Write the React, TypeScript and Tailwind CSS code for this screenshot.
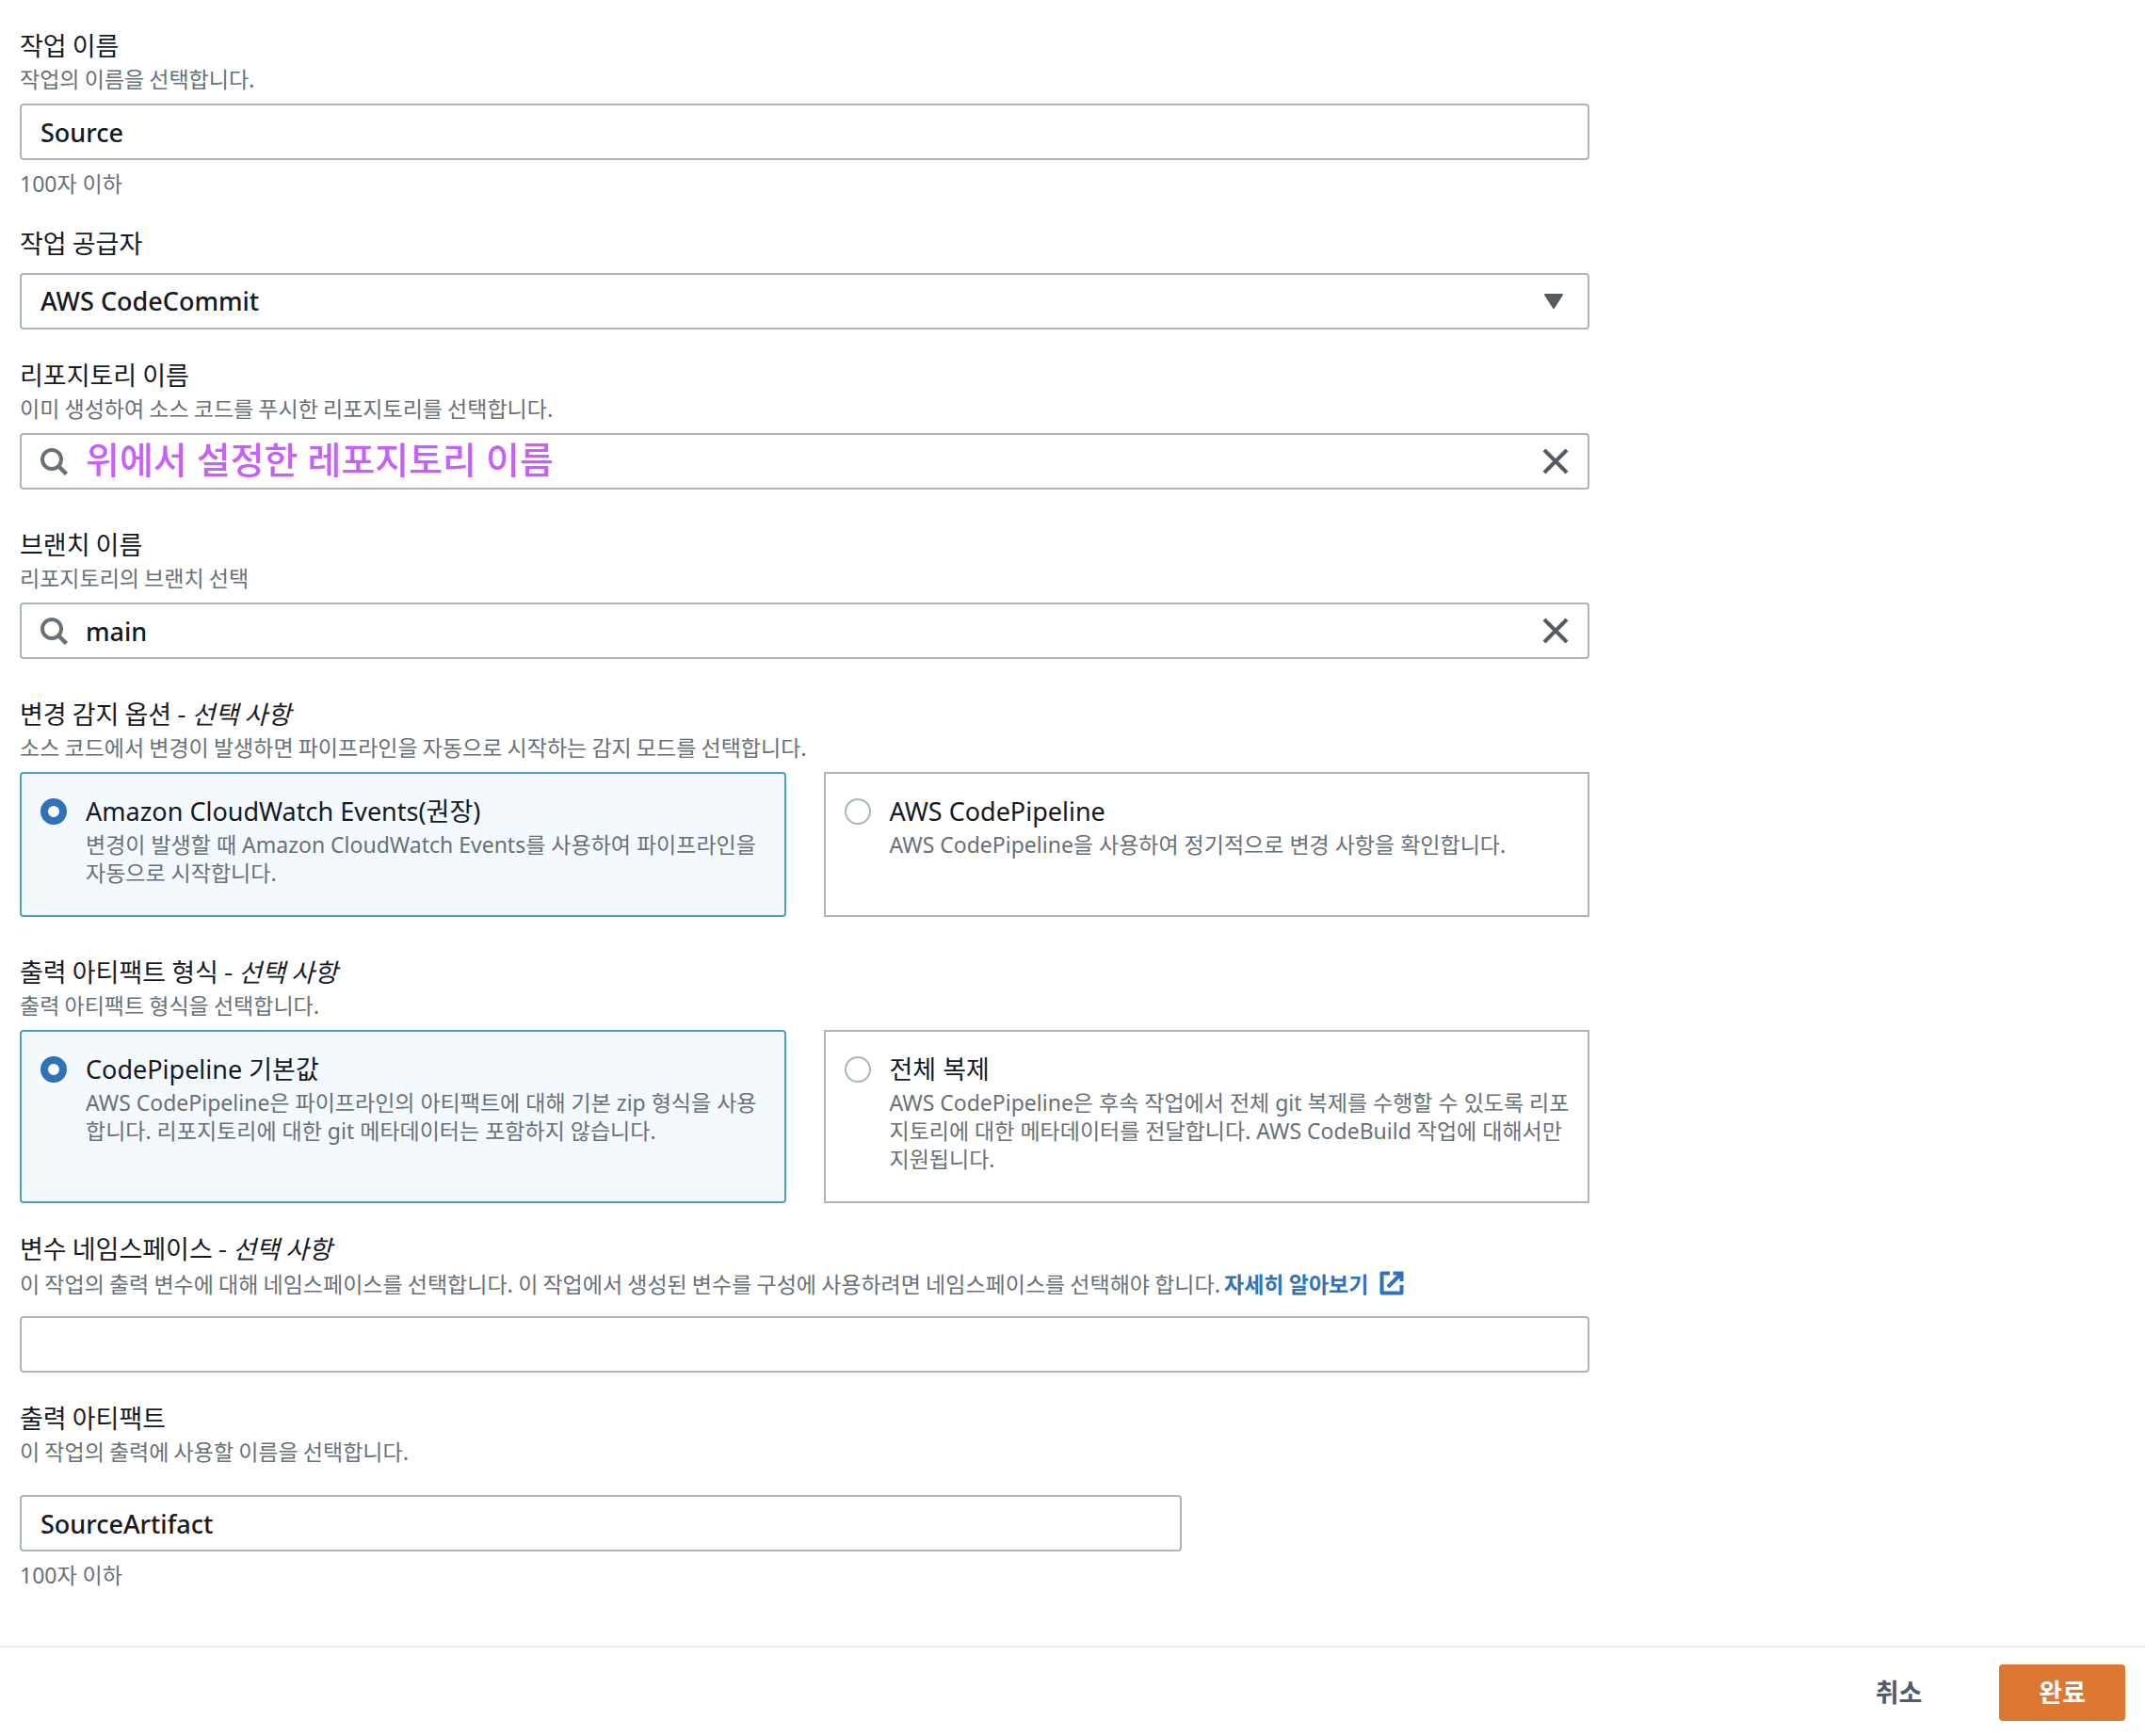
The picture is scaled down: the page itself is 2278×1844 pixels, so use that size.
import { useState } from "react";
import type { ReactNode } from "react";

interface RadioCardOption {
  value: string;
  title: string;
  description: string;
}

const detectionOptions: RadioCardOption[] = [
  {
    value: "cloudwatch",
    title: "Amazon CloudWatch Events(권장)",
    description:
      "변경이 발생할 때 Amazon CloudWatch Events를 사용하여 파이프라인을 자동으로 시작합니다.",
  },
  {
    value: "codepipeline",
    title: "AWS CodePipeline",
    description:
      "AWS CodePipeline을 사용하여 정기적으로 변경 사항을 확인합니다.",
  },
];

const formatOptions: RadioCardOption[] = [
  {
    value: "default",
    title: "CodePipeline 기본값",
    description:
      "AWS CodePipeline은 파이프라인의 아티팩트에 대해 기본 zip 형식을 사용합니다. 리포지토리에 대한 git 메타데이터는 포함하지 않습니다.",
  },
  {
    value: "clone",
    title: "전체 복제",
    description:
      "AWS CodePipeline은 후속 작업에서 전체 git 복제를 수행할 수 있도록 리포지토리에 대한 메타데이터를 전달합니다. AWS CodeBuild 작업에 대해서만 지원됩니다.",
  },
];

const inputClass =
  "h-[60px] rounded-[4px] border-2 border-[#aab7b8] bg-white px-5 text-[27px] font-medium text-[#16191f] outline-none focus:border-[#00a1c9]";

function SearchIcon() {
  return (
    <svg viewBox="0 0 30 30" className="h-[30px] w-[30px] shrink-0" fill="none" stroke="#687078">
      <circle cx="12" cy="13" r="10" strokeWidth="4" />
      <path d="M19 20l8.5 8.5" strokeWidth="4.5" />
    </svg>
  );
}

function CloseIcon() {
  return (
    <svg viewBox="0 0 28 28" className="h-7 w-7" fill="none" stroke="#545b64" strokeWidth="4">
      <path d="M2 2l24 24M26 2L2 26" />
    </svg>
  );
}

function CaretIcon() {
  return (
    <svg viewBox="0 0 20 16" className="h-4 w-5" fill="#545b64" stroke="#545b64" strokeWidth="2" strokeLinejoin="round">
      <path d="M1 1h18l-9 14z" />
    </svg>
  );
}

function ExternalIcon() {
  return (
    <svg viewBox="0 0 26 26" className="ml-3 h-[26px] w-[26px]" fill="none" stroke="currentColor" strokeWidth="4">
      <path d="M11 2.5H2.5v21h21V15" strokeLinejoin="round" />
      <path d="M14.5 2.5h9V11M23 3L9 17" />
    </svg>
  );
}

function FieldLabel({ children, optional, htmlFor }: { children: ReactNode; optional?: boolean; htmlFor?: string }) {
  const content = (
    <>
      {children}
      {optional && (
        <>
          {" - "}
          <i>선택 사항</i>
        </>
      )}
    </>
  );
  const className =
    "block font-['Noto_Sans_CJK_KR','Noto_Sans',sans-serif] text-[27px] leading-[40px] text-[#16191f]";

  return htmlFor ? (
    <label htmlFor={htmlFor} className={className}>
      {content}
    </label>
  ) : (
    <span className={className}>{content}</span>
  );
}

function Description({ children }: { children: ReactNode }) {
  return (
    <p className="font-['Noto_Sans_CJK_KR','Noto_Sans',sans-serif] text-[23px] leading-[30px] text-[#687078]">
      {children}
    </p>
  );
}

function Hint({ children }: { children: ReactNode }) {
  return <p className="mt-2.5 text-[23px] leading-[30px] text-[#687078]">{children}</p>;
}

function SearchField({ id, defaultValue, highlight }: { id: string; defaultValue: string; highlight?: boolean }) {
  const [value, setValue] = useState(defaultValue);

  return (
    <div className="mt-3 flex h-[60px] items-center rounded-[4px] border-2 border-[#aab7b8] bg-white px-5">
      <SearchIcon />
      <input
        id={id}
        type="text"
        value={value}
        onChange={(e) => setValue(e.target.value)}
        className={
          highlight
            ? "ml-[18px] h-full min-w-0 flex-1 pb-2 text-[39px] font-medium text-[#c561fa] outline-none"
            : "ml-[18px] h-full min-w-0 flex-1 text-[27px] font-medium text-[#16191f] outline-none"
        }
      />
      <button type="button" aria-label="지우기" onClick={() => setValue("")}>
        <CloseIcon />
      </button>
    </div>
  );
}

function RadioCards({ name, label, options }: { name: string; label: string; options: RadioCardOption[] }) {
  const [selected, setSelected] = useState(options[0].value);

  return (
    <div role="radiogroup" aria-label={label} className="mt-3 grid grid-cols-2 gap-10">
      {options.map((option) => {
        const checked = option.value === selected;
        return (
          <label
            key={option.value}
            className={
              checked
                ? "flex gap-5 rounded-[4px] border-2 border-[#47a1c7] bg-[#f3f9fd] pt-5 pr-4 pb-[30px] pl-5"
                : "flex gap-5 border-2 border-[#aab7b8] bg-white pt-5 pr-4 pb-[30px] pl-5"
            }
          >
            <input
              type="radio"
              name={name}
              checked={checked}
              onChange={() => setSelected(option.value)}
              className="mt-1.5 h-7 w-7 shrink-0 appearance-none rounded-full border-2 border-[#aab7b8] bg-white checked:border-8 checked:border-[#3072b8]"
            />
            <span className="min-w-0 flex-1">
              <span className="block text-[27px] leading-[40px] text-[#16191f]">{option.title}</span>
              <span className="block text-[23px] leading-[30px] text-[#687078]">{option.description}</span>
            </span>
          </label>
        );
      })}
    </div>
  );
}

export default function App() {
  return (
    <form
      className="bg-white font-['Noto_Sans','Noto_Sans_CJK_KR',sans-serif]"
      onSubmit={(e) => e.preventDefault()}
    >
      <div className="grid grid-cols-4 gap-10 px-[21px] pt-7 pb-[60px]">
        <div className="col-span-3 flex flex-col">
          {/* Action name */}
          <div>
            <FieldLabel htmlFor="action-name">작업 이름</FieldLabel>
            <Description>작업의 이름을 선택합니다.</Description>
            <input id="action-name" type="text" defaultValue="Source" className={`${inputClass} mt-3 block w-full`} />
            <Hint>100자 이하</Hint>
          </div>

          {/* Provider */}
          <div className="mt-7">
            <FieldLabel htmlFor="provider">작업 공급자</FieldLabel>
            <div className="relative mt-3">
              <select id="provider" className={`${inputClass} block w-full appearance-none`}>
                <option>AWS CodeCommit</option>
              </select>
              <span className="pointer-events-none absolute inset-y-0 right-7 flex items-center">
                <CaretIcon />
              </span>
            </div>
          </div>

          {/* Repository */}
          <div className="mt-7">
            <FieldLabel htmlFor="repository">리포지토리 이름</FieldLabel>
            <Description>이미 생성하여 소스 코드를 푸시한 리포지토리를 선택합니다.</Description>
            <SearchField id="repository" defaultValue="위에서 설정한 레포지토리 이름" highlight />
          </div>

          {/* Branch */}
          <div className="mt-[38px]">
            <FieldLabel htmlFor="branch">브랜치 이름</FieldLabel>
            <Description>리포지토리의 브랜치 선택</Description>
            <SearchField id="branch" defaultValue="main" />
          </div>

          {/* Change detection */}
          <div className="mt-[38px]">
            <FieldLabel optional>변경 감지 옵션</FieldLabel>
            <Description>소스 코드에서 변경이 발생하면 파이프라인을 자동으로 시작하는 감지 모드를 선택합니다.</Description>
            <RadioCards name="detection" label="변경 감지 옵션" options={detectionOptions} />
          </div>

          {/* Artifact format */}
          <div className="mt-[38px]">
            <FieldLabel optional>출력 아티팩트 형식</FieldLabel>
            <Description>출력 아티팩트 형식을 선택합니다.</Description>
            <RadioCards name="format" label="출력 아티팩트 형식" options={formatOptions} />
          </div>

          {/* Namespace */}
          <div className="mt-7">
            <FieldLabel htmlFor="namespace" optional>
              변수 네임스페이스
            </FieldLabel>
            <div className="flex flex-wrap items-center font-['Noto_Sans_CJK_KR','Noto_Sans',sans-serif] text-[23px] leading-[34px] text-[#687078]">
              <span>
                이 작업의 출력 변수에 대해 네임스페이스를 선택합니다. 이 작업에서 생성된 변수를 구성에 사용하려면 네임스페이스를 선택해야 합니다.
              </span>
              <a href="#" className="ml-1 flex items-center font-bold text-[#3072b8]">
                자세히 알아보기
                <ExternalIcon />
              </a>
            </div>
            <input id="namespace" type="text" className={`${inputClass} mt-[18px] block w-full`} />
          </div>

          {/* Output artifact */}
          <div className="mt-7">
            <FieldLabel htmlFor="artifact">출력 아티팩트</FieldLabel>
            <Description>이 작업의 출력에 사용할 이름을 선택합니다.</Description>
            <input id="artifact" type="text" defaultValue="SourceArtifact" className={`${inputClass} mt-8 block w-[74%]`} />
            <Hint>100자 이하</Hint>
          </div>
        </div>
      </div>

      <footer className="flex justify-end gap-10 border-t-2 border-[#eaeded] px-[21px] pt-[18px] pb-4 text-[27px] font-bold">
        <button type="button" className="h-[60px] rounded-[4px] px-[42px] text-[#545b64]">
          취소
        </button>
        <button type="submit" className="h-[60px] rounded-[4px] bg-[#dd7832] px-[42px] text-white">
          완료
        </button>
      </footer>
    </form>
  );
}
